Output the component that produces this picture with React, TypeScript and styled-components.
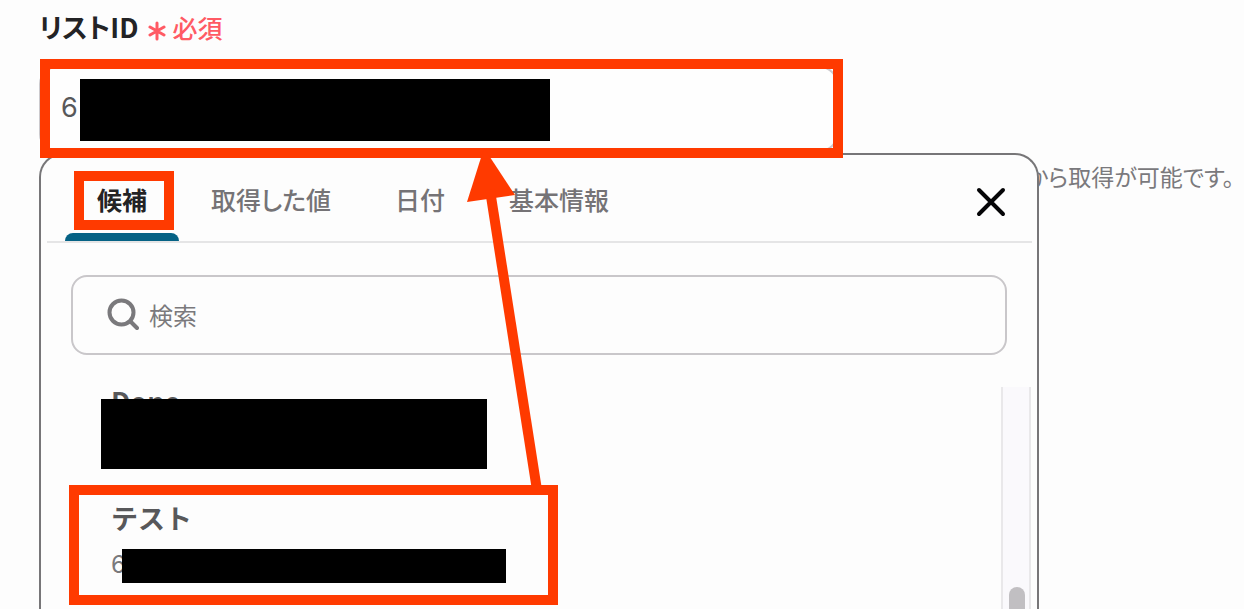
import React from "react";
import styled, { createGlobalStyle, css } from "styled-components";

const accent = "#ff3a00";

const GlobalStyle = createGlobalStyle`
  *, *::before, *::after { box-sizing: border-box; }
  body {
    margin: 0;
    background: #fdfdfd;
    color: #232325;
    font-family: "Noto Sans CJK JP", sans-serif;
    font-feature-settings: "palt";
  }
  button, input { font: inherit; font-feature-settings: inherit; color: inherit; }
  button { border: 0; background: none; padding: 0; cursor: pointer; }
`;

const Page = styled.main`
  position: relative;
  display: flex;
  flex-direction: column;
  height: 100vh;
  overflow: hidden;
  padding-left: 39px;
`;

const FieldHeader = styled.div`
  display: flex;
  align-items: center;
  gap: 10px;
  height: 66px;
  padding-bottom: 12px;
`;

const FieldLabel = styled.label`
  font-size: 27px;
  line-height: 32px;
  font-weight: 700;
`;

const Required = styled.span`
  display: flex;
  align-items: center;
  gap: 6px;
  color: #ff5a64;
  font-size: 25px;
  line-height: 32px;
  font-weight: 500;

  svg { margin-top: 8px; }
`;

const InputWrap = styled.div`
  position: relative;
  width: 100%;
  max-width: 799px;
  height: 87px;
`;

const TextInput = styled.input`
  display: block;
  width: 100%;
  height: 86px;
  padding: 0 20px 4px;
  border: 2px solid #cbc9cd;
  border-radius: 18px;
  outline: 0;
  background: #fefefe;
  color: #58585a;
  font-family: Inter, sans-serif;
  font-size: 27px;
`;

const Below = styled.div`
  display: grid;
  flex: 1;
  min-height: 0;

  > * { grid-area: 1 / 1; }
`;

const Hint = styled.p`
  margin: 0;
  padding: 7px 10px 0 0;
  color: #7a797c;
  font-size: 23px;
  line-height: 32px;
  text-align: right;
  white-space: nowrap;
`;

const Panel = styled.section`
  z-index: 1;
  display: flex;
  flex-direction: column;
  min-height: 0;
  width: 100%;
  max-width: 1000px;
  border: 2px solid #777678;
  border-bottom: 0;
  border-radius: 24px 24px 0 0;
  background: #fdfdfd;
`;

const PanelHeader = styled.header`
  display: flex;
  justify-content: space-between;
  align-items: stretch;
  height: 88px;
  margin: 0 5px 0 6px;
  padding: 0 25px 0 18px;
  border-bottom: 2px solid #e5e5e6;
`;

const Tabs = styled.div`
  display: flex;
`;

const Tab = styled.button<{ $active?: boolean }>`
  position: relative;
  padding: 2px 32px 0;
  color: ${(p) => (p.$active ? "#232325" : "#757376")};
  font-size: 25px;
  line-height: 32px;
  font-weight: ${(p) => (p.$active ? 700 : 500)};
  white-space: nowrap;

  ${(p) =>
    p.$active &&
    css`
      &::after {
        content: "";
        position: absolute;
        inset: auto 0 0;
        height: 8px;
        border-radius: 8px 8px 0 0;
        background: #056285;
      }
    `}
`;

const CloseButton = styled.button`
  display: flex;
  align-items: center;
  padding-top: 8px;
`;

const SearchBox = styled.label`
  display: flex;
  flex: none;
  align-items: center;
  gap: 10px;
  height: 80px;
  margin: 32px 30px;
  padding: 0 34px;
  border: 2px solid #c9c7ca;
  border-radius: 16px;

  input {
    flex: 1;
    min-width: 0;
    padding: 0;
    border: 0;
    outline: 0;
    background: none;
    font-size: 24px;
    line-height: 32px;
  }
  input::placeholder { color: #7a797c; opacity: 1; }
`;

const ListArea = styled.div`
  display: flex;
  flex: 1;
  min-height: 0;
  margin-right: 6px;
`;

const List = styled.ul`
  flex: 1;
  min-width: 0;
  margin: 0;
  padding: 0 0 0 70px;
  list-style: none;
`;

const Item = styled.li`
  position: relative;
  display: flex;
  flex-direction: column;
  gap: 19px;
  height: 117px;
  line-height: 28px;
`;

const ItemTitle = styled.span`
  color: #58585a;
  font-size: 27px;
  font-weight: 700;
  font-feature-settings: normal;
`;

const ItemValue = styled.span`
  color: #7a797c;
  font-family: Inter, sans-serif;
  font-size: 24px;
`;

const Scrollbar = styled.div`
  width: 30px;
  padding: 200px 6px 0;
  border: solid #e9e8ea;
  border-width: 0 2px;
  background: #faf9fc;
`;

const Thumb = styled.div`
  width: 16px;
  height: 100px;
  border-radius: 8px;
  background: #c1bfc2;
`;

type Box = { $x: number; $y: number; $w: number; $h: number };

const Mark = styled.span<Box>`
  position: absolute;
  left: ${(p) => p.$x}px;
  top: ${(p) => p.$y}px;
  width: ${(p) => p.$w}px;
  height: ${(p) => p.$h}px;
  pointer-events: none;
`;

const Redaction = styled(Mark)`
  background: #000;
`;

const Highlight = styled(Mark)`
  z-index: 2;
  border: 10px solid ${accent};
`;

const Arrow = styled.svg`
  position: absolute;
  left: 460px;
  top: 148px;
  z-index: 3;
  pointer-events: none;
`;

export default function App() {
  return (
    <>
      <GlobalStyle />
      <Page>
        <FieldHeader>
          <FieldLabel htmlFor="list-id">リストID</FieldLabel>
          <Required>
            <svg width="18" height="20" viewBox="0 0 18 20" fill="none" stroke="currentColor" strokeWidth="3" strokeLinecap="round" aria-hidden="true">
              <path d="M9 2v16M2 6l14 8M16 6L2 14" />
            </svg>
            必須
          </Required>
        </FieldHeader>

        <InputWrap>
          <TextInput id="list-id" defaultValue="6" />
          <Redaction $x={41} $y={13} $w={470} $h={62} />
          <Highlight $x={1} $y={-7} $w={803} $h={99} />
        </InputWrap>

        <Below>
          <Hint>から取得が可能です。</Hint>
          <Panel>
            <PanelHeader>
              <Tabs role="tablist">
                <Tab role="tab" aria-selected $active>
                  候補
                  <Highlight $x={9} $y={16} $w={100} $h={59} />
                </Tab>
                <Tab role="tab">取得した値</Tab>
                <Tab role="tab">日付</Tab>
                <Tab role="tab">基本情報</Tab>
              </Tabs>
              <CloseButton aria-label="閉じる">
                <svg width="32" height="32" viewBox="0 0 32 32" fill="none" stroke="#050507" strokeWidth="4" strokeLinecap="round" aria-hidden="true">
                  <path d="M4 4l24 24M28 4L4 28" />
                </svg>
              </CloseButton>
            </PanelHeader>

            <SearchBox>
              <svg width="32" height="34" viewBox="0 0 32 34" fill="none" stroke="#7a797c" strokeWidth="4" strokeLinecap="round" aria-hidden="true">
                <circle cx="14.5" cy="14.5" r="12" />
                <path d="M23.5 23.5l6.5 6.5" />
              </svg>
              <input type="text" placeholder="検索" aria-label="検索" />
            </SearchBox>

            <ListArea>
              <List>
                <Item>
                  <ItemTitle>Done</ItemTitle>
                  <Redaction $x={-10} $y={12} $w={386} $h={70} />
                </Item>
                <Item>
                  <ItemTitle>テスト</ItemTitle>
                  <ItemValue>6</ItemValue>
                  <Redaction $x={11} $y={45} $w={384} $h={34} />
                  <Highlight $x={-42} $y={-19} $w={489} $h={120} />
                </Item>
              </List>
              <Scrollbar>
                <Thumb />
              </Scrollbar>
            </ListArea>
          </Panel>
        </Below>

        <Arrow width="90" height="345" viewBox="460 148 90 345" aria-hidden="true">
          <path d="M484 148L467 202L515 195Z" fill={accent} />
          <path d="M490 190L537 490" stroke={accent} strokeWidth="10" />
        </Arrow>
      </Page>
    </>
  );
}
